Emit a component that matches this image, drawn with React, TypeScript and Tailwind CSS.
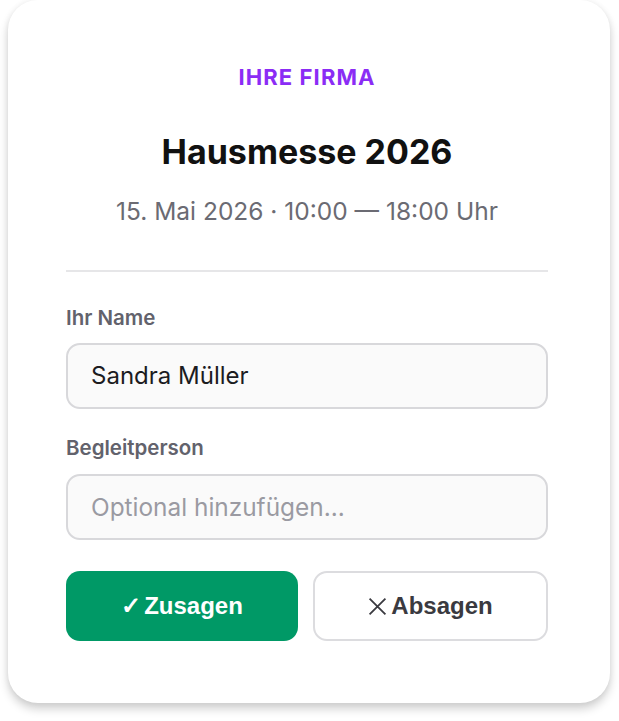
export default function App() {
  return (
    <div className="min-h-screen bg-white px-[8px] pt-0 pb-[16px]" style={{ fontFamily: 'Inter, "Noto Sans", sans-serif' }}>
      <div className="w-[602px] h-[703px] rounded-[30px] bg-white shadow-[0_6px_10px_rgba(0,0,0,0.18),0_0_6px_rgba(0,0,0,0.06)] pl-[58px] pr-[62px] pt-[63px]">
        <div className="text-center text-[22px] leading-[28px] font-bold tracking-[0.05em] text-[#8b2cf5]">IHRE FIRMA</div>
        <h1 className="mt-[40px] text-center text-[34px] leading-[42px] font-bold text-[#111111]">Hausmesse 2026</h1>
        <p className="mt-[22px] text-center text-[24.5px] leading-[32px] text-[#6b6b73]">15. Mai 2026 · 10:00 — 18:00 Uhr</p>
        <div className="mt-[43px] h-[2px] bg-[#e6e6e8]" />

        <label className="block mt-[33px] text-[20.5px] leading-[26px] font-semibold text-[#62626c]">Ihr Name</label>
        <div className="mt-[12px] h-[66px] rounded-[14px] border-2 border-[#d8d8db] bg-[#fafafa] flex items-center px-[23px] text-[24px] text-[#1c1c1f]">
          Sandra Müller
        </div>

        <label className="block mt-[26px] text-[20.5px] leading-[26px] font-semibold text-[#62626c]">Begleitperson</label>
        <div className="mt-[13px] h-[66px] rounded-[14px] border-2 border-[#d8d8db] bg-[#fafafa] flex items-center px-[23px] text-[24.4px] text-[#9a9aa2]">
          Optional hinzufügen...
        </div>

        <div className="mt-[31px] flex gap-[15px]">
          <button
            className="w-[232px] h-[70px] rounded-[14px] bg-[#009966] text-white text-[24px] font-bold flex items-center justify-center gap-[3px]"
            style={{ fontFamily: '"Liberation Sans", Arial, sans-serif' }}
          >
            <span>✓</span>
            <span>Zusagen</span>
          </button>
          <button
            className="flex-1 h-[70px] rounded-[14px] border-2 border-[#dcdcdf] bg-white text-[#3a3a40] text-[24px] font-bold flex items-center justify-center gap-[4px]"
            style={{ fontFamily: '"Liberation Sans", Arial, sans-serif' }}
          >
            <svg width="19" height="19" viewBox="0 0 18 18" fill="none" stroke="#3a3a40" strokeWidth="1.7">
              <path d="M1.5 1.5 L16.5 16.5 M16.5 1.5 L1.5 16.5" />
            </svg>
            Absagen
          </button>
        </div>
      </div>
    </div>
  )
}
